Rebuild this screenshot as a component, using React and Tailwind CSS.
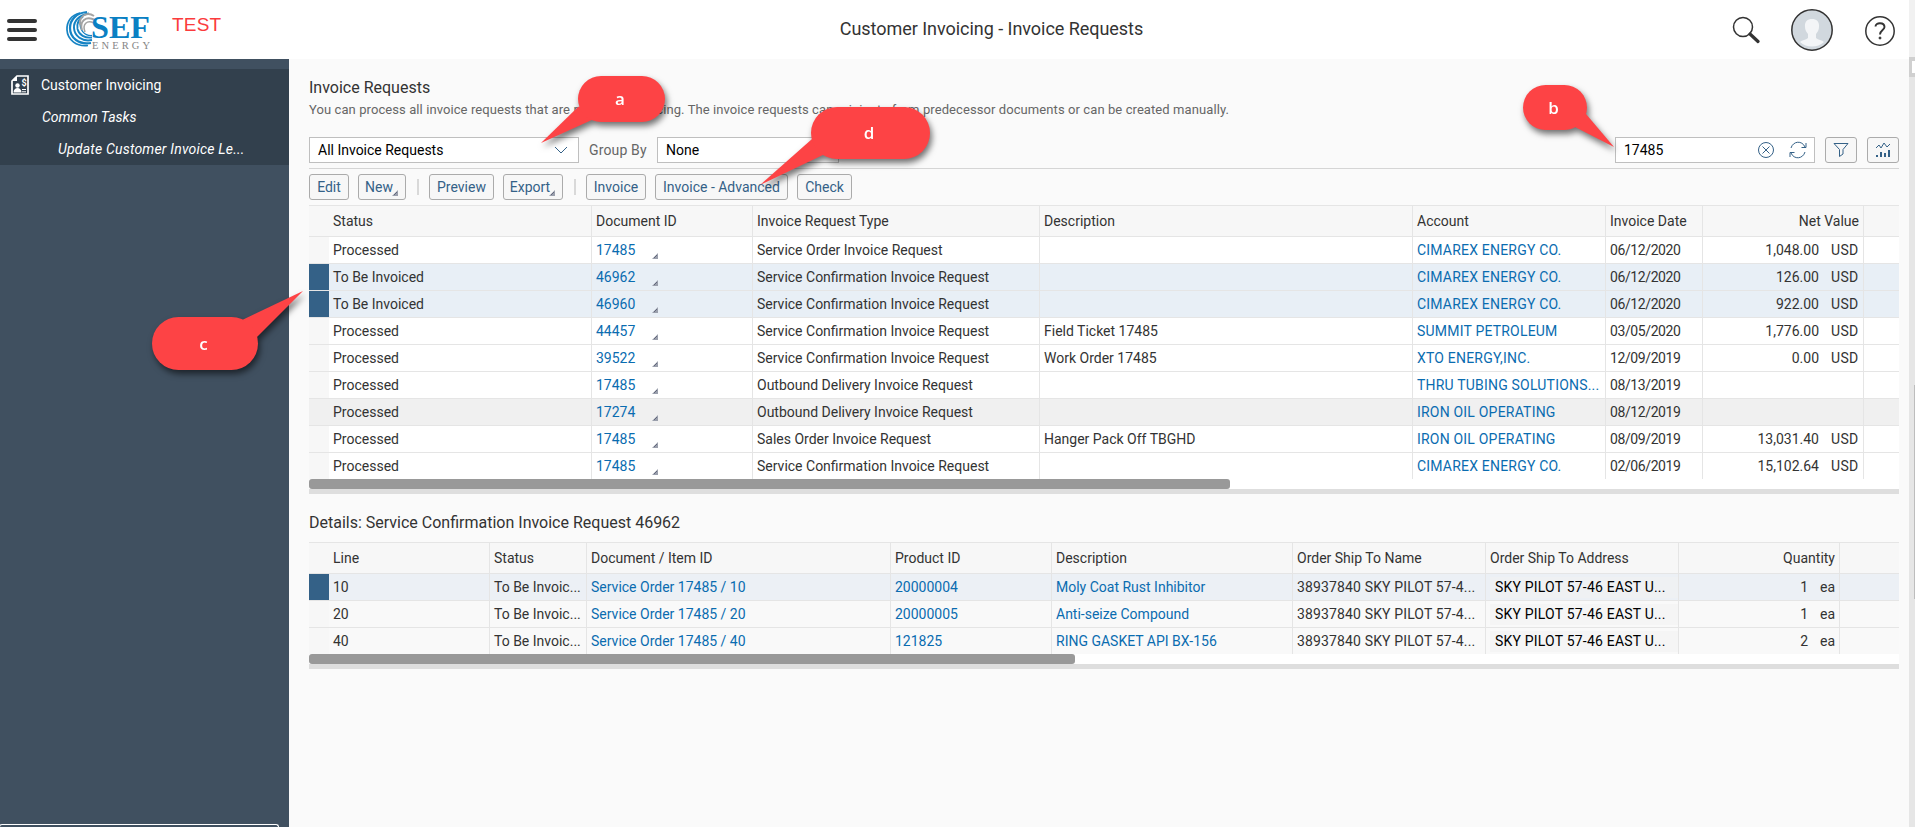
import React from "react";

const invoiceCols = "grid-cols-[20px_263px_161px_287px_373px_193px_97px_161px_1fr]";
const detailCols = "grid-cols-[20px_161px_97px_304px_161px_241px_193px_193px_161px_1fr]";

const invoices = [
  { status: "Processed", id: "17485", type: "Service Order Invoice Request", desc: "", account: "CIMAREX ENERGY CO.", date: "06/12/2020", value: "1,048.00" },
  { status: "To Be Invoiced", id: "46962", type: "Service Confirmation Invoice Request", desc: "", account: "CIMAREX ENERGY CO.", date: "06/12/2020", value: "126.00", selected: true },
  { status: "To Be Invoiced", id: "46960", type: "Service Confirmation Invoice Request", desc: "", account: "CIMAREX ENERGY CO.", date: "06/12/2020", value: "922.00", selected: true },
  { status: "Processed", id: "44457", type: "Service Confirmation Invoice Request", desc: "Field Ticket 17485", account: "SUMMIT PETROLEUM", date: "03/05/2020", value: "1,776.00" },
  { status: "Processed", id: "39522", type: "Service Confirmation Invoice Request", desc: "Work Order 17485", account: "XTO ENERGY,INC.", date: "12/09/2019", value: "0.00" },
  { status: "Processed", id: "17485", type: "Outbound Delivery Invoice Request", desc: "", account: "THRU TUBING SOLUTIONS...", date: "08/13/2019", value: "" },
  { status: "Processed", id: "17274", type: "Outbound Delivery Invoice Request", desc: "", account: "IRON OIL OPERATING", date: "08/12/2019", value: "", hovered: true },
  { status: "Processed", id: "17485", type: "Sales Order Invoice Request", desc: "Hanger Pack Off TBGHD", account: "IRON OIL OPERATING", date: "08/09/2019", value: "13,031.40" },
  { status: "Processed", id: "17485", type: "Service Confirmation Invoice Request", desc: "", account: "CIMAREX ENERGY CO.", date: "02/06/2019", value: "15,102.64" },
];

const details = [
  { line: "10", product: "20000004", desc: "Moly Coat Rust Inhibitor", qty: "1", selected: true },
  { line: "20", product: "20000005", desc: "Anti-seize Compound", qty: "1" },
  { line: "40", product: "121825", desc: "RING GASKET API BX-156", qty: "2" },
];

const Corner = ({ className }) => (
  <svg width="6" height="6" viewBox="0 0 6 6" className={className}>
    <path d="M6 0V6H0Z" fill="#9a9fac" />
    <path d="M2 5L5 2" stroke="#4a4f66" strokeWidth="0.7" />
  </svg>
);

const Cell = ({ children, className = "", last }) => (
  <div className={`flex items-center whitespace-nowrap overflow-hidden pl-1 ${last ? "" : "border-r border-[#e5e5e5]"} ${className}`}>
    {children}
  </div>
);

const ToolButton = ({ label, menu, className }) => (
  <button type="button" className={`relative flex h-[26px] items-center justify-center rounded-[3px] border border-[#ababab] bg-[#f7f7f7] text-[#346187] ${className}`}>
    <span className={menu ? "mr-1.5" : ""}>{label}</span>
    {menu && <Corner className="absolute right-[7px] bottom-[3px]" />}
  </button>
);

const Scroll = ({ className }) => (
  <div className="h-[15px] border-b-[5px] border-[#dedede] bg-white">
    <div className={`h-2.5 rounded-[3px] bg-[#999] ${className}`} />
  </div>
);

const Chevron = () => (
  <svg width="14" height="8" viewBox="0 0 14 8" fill="none" stroke="#346187">
    <path d="M1 1L7 7L13 1" />
  </svg>
);

const Logo = () => (
  <svg width="90" height="46" viewBox="0 0 90 46" className="ml-[26px] overflow-visible">
    <g fill="none" stroke="#1583c4">
      <path d="M17 6C8 8 3.500 15 4 23C4.500 33 14 40 25 38.500" strokeWidth="1.700" />
      <path d="M24 5C13 6 7 13 7 21C7 31 16 38 28 36" strokeWidth="2.200" />
      <path d="M26 6.500C16 8 10.500 14 11 21C11.500 29 19 35 29 33" strokeWidth="2" />
      <path d="M20 9.500C15 13 13.500 17 14.500 22C16 28 22 31.500 29 30.500" strokeWidth="1.800" />
      <path d="M17.500 15C16 22 21 29 29 28.500" strokeWidth="1.300" />
    </g>
    <g fill="none" stroke="#a3a3a3">
      <path d="M17 18C16 9 24 4 31 9" strokeWidth="1.900" />
      <path d="M19 23C16 14 23 8.500 32 13" strokeWidth="2" />
      <path d="M22 25C19 17 24 12.500 31 16" strokeWidth="1.500" />
    </g>
    <text x="28" y="30.500" textLength="59" lengthAdjust="spacingAndGlyphs" fill="#0a80c3" fontFamily="Liberation Serif, serif" fontWeight="700" fontSize="31.500">SEF</text>
    <text x="29" y="41.500" textLength="58" fill="#858585" fontFamily="Liberation Serif, serif" fontSize="10.500">ENERGY</text>
  </svg>
);

const TopBar = () => (
  <header className="relative flex h-[59px] items-center bg-white">
    <div className="ml-[7px] flex w-[30px] flex-col gap-[5px] pt-px">
      <span className="h-1 rounded-full bg-[#333]" />
      <span className="h-1 rounded-full bg-[#333]" />
      <span className="h-1 rounded-full bg-[#333]" />
    </div>
    <Logo />
    <span className="mb-2 ml-[19px] font-['Liberation_Sans',sans-serif] text-[19px] tracking-[0.2px] text-[#fb3b3d]">TEST</span>
    <h1 className="absolute left-1/2 top-0 ml-[37px] -translate-x-1/2 whitespace-nowrap text-[18px] leading-[57px] tracking-[-0.04px] text-[#333]">
      Customer Invoicing - Invoice Requests
    </h1>
    <div className="ml-auto flex items-center">
      <svg width="28" height="28" viewBox="0 0 28 28" fill="none" stroke="#333">
        <circle cx="11" cy="11" r="9.5" strokeWidth="1.5" />
        <path d="M18 18L26 25.5" strokeWidth="3.2" strokeLinecap="round" />
      </svg>
      <svg width="42" height="42" viewBox="0 0 42 42" className="ml-[31px]">
        <circle cx="21" cy="21" r="20.2" fill="#d1d8de" />
        <path d="M21 10c-5 0-7.500 3-7 8c0 3 1.500 5 3 7v4c-2 2-6 2-8 4a18 18 0 0 0 24 0c-2-2-6-2-8-4v-4c1.500-2 3-4 3-7c.5-5-2-8-7-8Z" fill="#f3f5f7" />
        <circle cx="21" cy="21" r="20.2" fill="none" stroke="#333" strokeWidth="1.5" />
      </svg>
      <svg width="30" height="30" viewBox="0 0 30 30" fill="none" stroke="#333" className="ml-8 mt-0.5">
        <circle cx="15" cy="15" r="14.2" strokeWidth="1.5" />
        <path d="M10.500 10.500C10.500 6 19.500 6 19.500 11C19.500 14 15 14 15 18.500" strokeWidth="1.9" />
        <circle cx="15" cy="22" r="1" fill="#333" />
      </svg>
    </div>
    <div className="w-3.5" />
  </header>
);

const Sidebar = () => (
  <aside className="relative w-[289px] shrink-0 overflow-hidden bg-[#405060] pt-2.5 text-white">
    <nav className="flex h-24 flex-col bg-[#32404d] text-[14px]">
      <div className="flex h-8 items-center">
        <svg width="18" height="20" viewBox="0 0 18 20" className="ml-[11px]" fill="none" stroke="#fff">
          <path d="M6 1H17V19H1V6Z" strokeWidth="1.7" />
          <path d="M1 6L6 1V6Z" fill="#fff" stroke="none" />
          <circle cx="6.5" cy="10.500" r="2.2" fill="#fff" stroke="none" />
          <path d="M2.500 17.500c0-6 8-6 8 0Z" fill="#fff" stroke="none" />
          <path d="M11 14.500h4M11 16.800h4" strokeWidth="1" />
          <text x="10.500" y="11" fontSize="9" fontWeight="700" fill="#fff" stroke="none">$</text>
        </svg>
        <span className="ml-3">Customer Invoicing</span>
      </div>
      <div className="flex h-8 items-center pl-[42px] italic">Common Tasks</div>
      <div className="flex h-8 items-center pl-[58px] tracking-[0.2px] italic">Update Customer Invoice Le...</div>
    </nav>
    <div className="absolute -left-px bottom-0 h-[3px] w-[280px] rounded-t-[3px] border border-b-0 border-white" />
  </aside>
);

const Callout = ({ letter, box, points, view }) => (
  <div className={`absolute ${box} drop-shadow-[2px_4px_3px_rgba(0,0,0,0.55)]`}>
    <svg className="absolute inset-0 overflow-visible" width="100%" height="100%" viewBox={view}>
      <polygon points={points} fill="#fd4345" />
    </svg>
    <div className="relative flex h-full items-center justify-center rounded-full bg-[#fd4345] pr-[3px] font-['Open_Sans',sans-serif] text-[17px] font-semibold text-white">
      {letter}
    </div>
  </div>
);

const FilterRow = () => (
  <div className="flex h-8 items-start border-b border-[#d5d5d5]">
    <div className="flex h-[26px] w-[270px] items-center justify-between border border-[#bfbfbf] bg-white pr-2.5 pl-2 text-black">
      All Invoice Requests
      <Chevron />
    </div>
    <span className="ml-2.5 w-[68px] leading-[26px] tracking-[0.15px] text-[#666]">Group By</span>
    <div className="flex h-[26px] w-[182px] items-center justify-between border border-[#bfbfbf] bg-white pr-2.5 pl-2 text-black">
      None
      <Chevron />
    </div>
    <div className="ml-auto flex h-[26px] w-[200px] items-center border border-[#bfbfbf] bg-white pl-2 text-black">
      17485
      <svg width="16" height="16" viewBox="0 0 16 16" fill="none" stroke="#346187" className="ml-auto">
        <circle cx="8" cy="8" r="7.5" />
        <path d="M4.500 4.500L11.500 11.500M11.500 4.500L4.500 11.500" />
      </svg>
      <svg width="18" height="18" viewBox="0 0 18 18" fill="none" stroke="#346187" className="mr-[7px] ml-[15px]">
        <path d="M2 7C4 0 13 -1 16 6M17 2V6.500H12.500M16 11C14 18 5 19 2 12M1 16V11.500H5.500" />
      </svg>
    </div>
    <button type="button" className="ml-2.5 flex h-[26px] w-8 items-center justify-center rounded-[3px] border border-[#ababab] bg-[#f7f7f7]">
      <svg width="16" height="16" viewBox="0 0 16 16" fill="none" stroke="#346187">
        <path d="M1 1.500H15L10 7.500V12L6.500 14.500V7.500Z" />
      </svg>
    </button>
    <button type="button" className="ml-2.5 flex h-[26px] w-8 items-center justify-center rounded-[3px] border border-[#ababab] bg-[#f7f7f7]">
      <svg width="16" height="16" viewBox="0 0 16 16" fill="none" stroke="#346187">
        <path d="M1 6L4 3L6 6L9 1L12 5L15 2" />
        <path d="M2 13V15M6 10V15M10 11V15M14 8V15" strokeWidth="2" />
      </svg>
    </button>
  </div>
);

const Toolbar = () => (
  <div className="flex h-9 items-center text-[14px]">
    <ToolButton label="Edit" className="w-10" />
    <ToolButton label="New" menu className="ml-[9px] w-12" />
    <div className="ml-[11px] h-4 w-0.5 bg-[#d9d9d9]" />
    <ToolButton label="Preview" className="ml-[10px] w-[65px]" />
    <ToolButton label="Export" menu className="ml-[9px] w-[60px]" />
    <div className="ml-[11px] h-4 w-0.5 bg-[#d9d9d9]" />
    <ToolButton label="Invoice" className="ml-[10px] w-[60px]" />
    <ToolButton label="Invoice - Advanced" className="ml-[9px] w-[133px]" />
    <ToolButton label="Check" className="ml-[9px] w-[55px]" />
  </div>
);

const InvoiceTable = () => (
  <div className="border-t border-[#e5e5e5]">
    <div className={`grid h-[31px] border-b border-[#e5e5e5] bg-[#f7f7f7] ${invoiceCols}`}>
      <div />
      <Cell>Status</Cell>
      <Cell>Document ID</Cell>
      <Cell>Invoice Request Type</Cell>
      <Cell>Description</Cell>
      <Cell>Account</Cell>
      <Cell>Invoice Date</Cell>
      <Cell className="justify-end pr-1">Net Value</Cell>
      <div />
    </div>
    {invoices.map((row, i) => (
      <div
        key={i}
        className={`grid ${i === invoices.length - 1 ? "h-[26px]" : "h-[27px] border-b border-[#e5e5e5]"} ${row.selected ? "bg-[#e8eff6]" : row.hovered ? "bg-[#f0f0f0]" : "bg-white"} ${invoiceCols}`}
      >
        <div className={row.selected ? "bg-[#346187]" : row.hovered ? "" : "bg-[#f7f7f7]"} />
        <Cell>{row.status}</Cell>
        <Cell className="relative text-[#0a6cb0]">
          {row.id}
          <Corner className="absolute left-[60px] bottom-[4px]" />
        </Cell>
        <Cell>{row.type}</Cell>
        <Cell>{row.desc}</Cell>
        <Cell className="tracking-[0.2px] text-[#0a6cb0]">{row.account}</Cell>
        <Cell className="tracking-[-0.4px]">{row.date}</Cell>
        <Cell className="justify-end pr-1">
          {row.value && (
            <>
              <span>{row.value}</span>
              <span className="ml-3 w-7 tracking-[0.3px]">USD</span>
            </>
          )}
        </Cell>
        <div />
      </div>
    ))}
    <Scroll className="w-[921px]" />
  </div>
);

const DetailTable = () => (
  <div className="border-t border-[#e5e5e5]">
    <div className={`grid h-[31px] border-b border-[#e5e5e5] bg-[#f7f7f7] ${detailCols}`}>
      <div />
      <Cell>Line</Cell>
      <Cell>Status</Cell>
      <Cell>Document / Item ID</Cell>
      <Cell>Product ID</Cell>
      <Cell>Description</Cell>
      <Cell>Order Ship To Name</Cell>
      <Cell>Order Ship To Address</Cell>
      <Cell className="justify-end pr-1">Quantity</Cell>
      <div />
    </div>
    {details.map((row, i) => (
      <div
        key={row.line}
        className={`grid ${i < details.length - 1 ? "h-[27px] border-b border-[#e5e5e5]" : "h-[26px]"} ${row.selected ? "bg-[#ecf0f5]" : "bg-[#f9f9f9]"} ${detailCols}`}
      >
        <div className={row.selected ? "bg-[#346187]" : "bg-[#f7f7f7]"} />
        <Cell>{row.line}</Cell>
        <Cell>To Be Invoic...</Cell>
        <Cell className="text-[#0a6cb0]">Service Order 17485 / {row.line}</Cell>
        <Cell className="text-[#0a6cb0]">{row.product}</Cell>
        <Cell className="text-[#0a6cb0]">{row.desc}</Cell>
        <Cell className="tracking-[0.14px]">38937840 SKY PILOT 57-4...</Cell>
        <Cell className="tracking-[0.2px] text-black">
          <span className="w-full bg-[#f2f2f2]/60 pl-[5px]">SKY PILOT 57-46 EAST U...</span>
        </Cell>
        <Cell className="justify-end pr-1">
          <span>{row.qty}</span>
          <span className="w-[27px] text-right">ea</span>
        </Cell>
        <div />
      </div>
    ))}
    <Scroll className="w-[766px]" />
  </div>
);

const App = () => {
  return (
    <div className="relative flex h-screen overflow-hidden bg-[#fafafa] font-[Roboto,sans-serif] text-[14px] text-[#333]">
      <div className="flex min-w-0 flex-1 flex-col">
        <TopBar />
        <div className="flex flex-1">
          <Sidebar />
          <main className="min-w-0 flex-1 pr-2.5 pl-5 pt-[18px]">
            <h2 className="h-[23px] text-[16px] leading-[22px]">Invoice Requests</h2>
            <p className="h-[37px] text-[13px] leading-[20px] tracking-[0.086px] whitespace-nowrap text-[#666]">
              You can process all invoice requests that are ready for invoicing. The invoice requests can originate from predecessor documents or can be created manually.
            </p>
            <FilterRow />
            <Toolbar />
            <InvoiceTable />
            <h3 className="h-12 pt-[17px] text-[16px] leading-6">Details: Service Confirmation Invoice Request 46962</h3>
            <DetailTable />
          </main>
        </div>
      </div>
      <div className="flex w-1.5 shrink-0 flex-col bg-[#e6e6e6]">
        <div className="h-[57px] bg-[#f1f1f1]" />
        <div className="h-5 border-y-[4px] border-l-[3px] border-[#d0d0d0] bg-white" />
        <div className="mt-[308px] ml-[5px] h-[214px] w-px bg-[#bdbdbd]" />
      </div>

      <Callout letter="a" box="left-[578px] top-[76px] h-[46px] w-[87px]" view="0 0 87 46" points="0,31 -37,67 16,43 20,25" />
      <Callout letter="d" box="left-[811px] top-[107px] h-[52px] w-[119px]" view="0 0 119 52" points="1,32 -51,78 14,47 20,28" />
      <Callout letter="b" box="left-[1523px] top-[85px] h-[45px] w-[64px]" view="0 0 64 45" points="63,29 91,62 52,42 45,25" />
      <Callout letter="c" box="left-[152px] top-[317px] h-[53px] w-[106px]" view="0 0 106 53" points="86,5 151,-26 105,20 90,26" />
    </div>
  );
};

export default App;
